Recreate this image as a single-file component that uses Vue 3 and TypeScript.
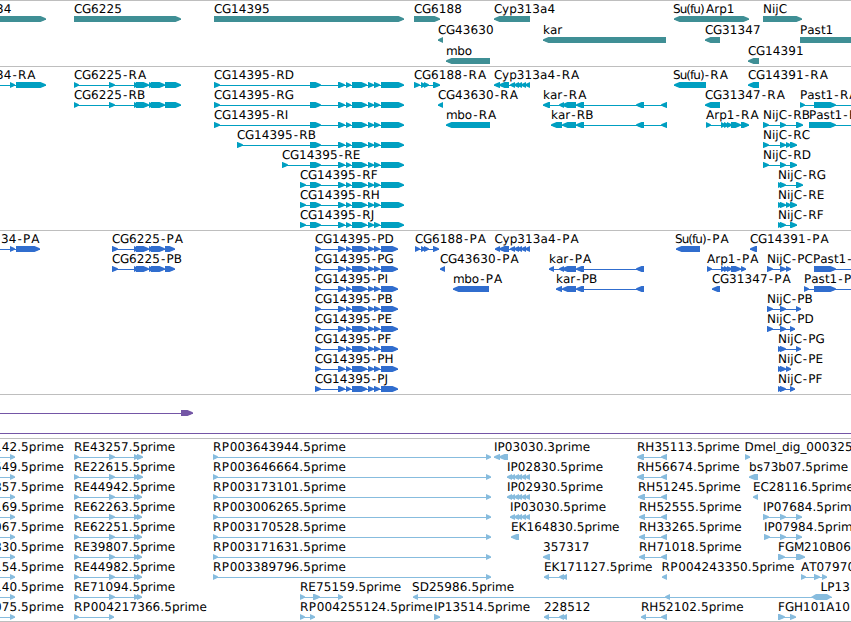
<script setup lang="ts">
type Block = [number, number]
type Strand = '+' | '-' | '='

interface Feature {
  label: string
  row: number
  x: number
  strand: Strand
  blocks: Block[]
  from: number
  to: number
}

interface Track {
  id: string
  height: number
  pitch: number
  features: Feature[]
}

const WIDTH = 851

function feat(label: string, row: number, strand: Strand, blocks: Block[], opts: Partial<Feature> = {}): Feature {
  return {
    label,
    row,
    strand,
    blocks,
    x: blocks.length ? blocks[0][0] : 0,
    from: blocks.length ? blocks[0][0] : 0,
    to: blocks.length ? blocks[blocks.length - 1][1] : WIDTH,
    ...opts,
  }
}

function shape([s, e]: Block, strand: Strand): string {
  const w = e - s
  const tip = Math.min(w, 5.5)
  const k = tip * 0.35
  if (strand === '=') return `${s},3 ${s + 5},0 ${e - 5},0 ${e},3 ${e - 5},6 ${s + 5},6`
  return strand === '+'
    ? `${s},0 ${e - tip},0 ${e - k},1.6 ${e},2.6 ${e},3.4 ${e - k},4.6 ${e - tip},6 ${s},6`
    : `${e},0 ${s + tip},0 ${s + k},1.6 ${s},2.6 ${s},3.4 ${s + k},4.6 ${s + tip},6 ${e},6`
}

// Per-character tracking, as shifts applied in front of each glyph.
function spacing(label: string): string {
  let inParens = label.startsWith('Su(fu)')
  return [...label]
    .map((c, i) => {
      if (i === 0) return 0
      const prev = label[i - 1]
      let d = 0
      if (inParens && i <= 6) d -= 0.95
      if (prev === '-') d += 1.2
      if (c === '-') d += 1
      if (c === 'A' && (prev === 'R' || prev === 'P')) d += 1
      if (/\d/.test(prev)) d += 0.1
      if (prev === 'C' || prev === 'G' || prev === 'M') d -= 0.3
      if (prev === 'R' && c === 'P') d += 0.5
      if (prev === 'P' && /\d/.test(c) && label[0] === 'R') d += 0.6
      if (prev === 'm' && c === 'b') d -= 0.5
      if (prev === '_') d -= 0.3
      return Math.round(d * 100) / 100
    })
    .join(' ')
}

const genes: Feature[] = [
  feat('34', 0, '+', [[-10, 46]], { x: -4 }),
  feat('CG6225', 0, '+', [[74, 181]]),
  feat('CG14395', 0, '+', [[214, 404]]),
  feat('CG6188', 0, '+', [[414, 440]]),
  feat('CG43630', 1, '-', [[438, 443]]),
  feat('mbo', 2, '-', [[446, 490]]),
  feat('Cyp313a4', 0, '-', [[494, 530]]),
  feat('kar', 1, '-', [[543, 666]]),
  feat('Su(fu)', 0, '-', [[674, 710]], { x: 673 }),
  feat('Arp1', 0, '+', [[706, 749]]),
  feat('CG31347', 1, '-', [[705, 720]]),
  feat('CG14391', 2, '-', [[748, 759]]),
  feat('NijC', 0, '+', [[763, 802]]),
  feat('Past1', 1, '+', [[800, 870]]),
]

const cg14395: Block[] = [[338, 345], [346, 351], [352, 367], [368, 374], [374, 380]]
const cypExons: Block[] = [[499, 509], [510, 515], [514, 519], [517, 522], [521, 526], [525, 530]]
const karExons: Block[] = [[562, 576], [576, 584], [636, 644]]
const arpExons: Block[] = [[721, 726], [724, 729], [727, 732], [731, 741]]

const rnaStarts: [string, number][] = [
  ['RD', 214], ['RG', 214], ['RI', 214], ['RB', 237], ['RE', 282], ['RF', 300], ['RH', 300], ['RJ', 300],
]

const transcripts: Feature[] = [
  feat('34-RA', 0, '+', [[10, 15], [16, 46]], { x: -4, from: -5 }),
  ...['RA', 'RB'].map((n, i) =>
    feat(`CG6225-${n}`, i, '+', [[74, 79], [109, 115], [134, 139], [136, 149], [149, 154], [151, 165], [165, 181]])),
  ...rnaStarts.map(([n, s], i) =>
    feat(`CG14395-${n}`, i, '+', [[s, s + 6], [310, 321], ...cg14395, [381, 404]])),
  feat('CG6188-RA', 0, '+', [[414, 420], [421, 426], [424, 429], [433, 440]]),
  feat('CG43630-RA', 1, '-', [[438, 443]]),
  feat('mbo-RA', 2, '-', [[446, 490]]),
  feat('Cyp313a4-RA', 0, '-', [[494, 500], ...cypExons]),
  feat('kar-RA', 1, '-', [[543, 550], [559, 564], ...karExons, [661, 667]]),
  feat('kar-RB', 2, '-', [[551, 562], ...karExons, [661, 667]]),
  feat('Su(fu)-RA', 0, '-', [[674, 706]], { x: 673 }),
  feat('CG14391-RA', 0, '-', [[748, 759]]),
  feat('CG31347-RA', 1, '-', [[705, 720]]),
  feat('Arp1-RA', 2, '+', [[706, 711], ...arpExons, [741, 749]]),
  feat('Past1-RA', 1, '+', [[800, 805], [814, 836]], { to: 870 }),
  feat('Past1-RB', 2, '+', [[809, 836]], { to: 870 }),
  feat('NijC-RB', 2, '+', [[763, 769], [780, 786], [796, 803]]),
  feat('NijC-RC', 3, '+', [[763, 769], [780, 786], [786, 791], [790, 797]]),
  feat('NijC-RD', 4, '+', [[763, 769], [780, 786], [790, 797]]),
  feat('NijC-RG', 5, '+', [[778, 783], [780, 786], [796, 803]]),
  feat('NijC-RE', 6, '+', [[778, 783], [780, 786], [786, 791], [790, 797]]),
  feat('NijC-RF', 7, '+', [[778, 783], [780, 786], [790, 797]]),
]

const proteins: Feature[] = [
  feat('34-PA', 0, '+', [[10, 15], [16, 40]], { x: 1, from: -5 }),
  ...['PA', 'PB'].map((n, i) =>
    feat(`CG6225-${n}`, i, '+', [[112, 118], [134, 139], [136, 149], [149, 154], [151, 165], [165, 175]])),
  ...['PD', 'PG', 'PI', 'PB', 'PE', 'PF', 'PH', 'PJ'].map((n, i) =>
    feat(`CG14395-${n}`, i, '+', [[315, 321], ...cg14395, [381, 398]])),
  feat('CG6188-PA', 0, '+', [[415, 420], [421, 426], [424, 429], [433, 439]]),
  feat('CG43630-PA', 1, '-', [[440, 445]]),
  feat('mbo-PA', 2, '-', [[453, 489]]),
  feat('Cyp313a4-PA', 0, '-', [[495, 500], ...cypExons], { x: 494.5 }),
  feat('kar-PA', 1, '-', [[549, 554], [559, 564], ...karExons]),
  feat('kar-PB', 2, '-', [[556, 562], ...karExons]),
  feat('Su(fu)-PA', 0, '-', [[676, 700]], { x: 675 }),
  feat('CG14391-PA', 0, '-', [[750, 757]]),
  feat('Arp1-PA', 1, '+', [[707, 712], ...arpExons, [741, 746]]),
  feat('CG31347-PA', 2, '-', [[712, 720]]),
  feat('Past1-PB', 1, '+', [[814, 836]], { x: 813, to: 870 }),
  feat('Past1-PA', 2, '+', [[804, 809], [814, 836]], { to: 870 }),
  feat('NijC-PC', 1, '+', [[767, 773], [780, 786], [786, 791]]),
  feat('NijC-PB', 3, '+', [[767, 773], [780, 786], [796, 801]]),
  feat('NijC-PD', 4, '+', [[767, 773], [780, 786], [790, 795]]),
  feat('NijC-PG', 5, '+', [[778, 783], [780, 786], [796, 801]]),
  feat('NijC-PE', 6, '+', [[778, 783], [780, 786], [786, 791]]),
  feat('NijC-PF', 7, '+', [[778, 783], [780, 786], [790, 795]]),
]

const noncoding: Feature[] = [
  feat('', 0, '+', [[181, 193]], { from: -5 }),
  feat('', 1, '+', []),
]

const ests: Feature[] = [
  ...['142', '549', '857', '169', '067', '830', '154', '140', '075'].map((n, i) =>
    feat(`${n}.5prime`, i, '+', [[10, 15]], { x: -6, from: -5 })),
  ...['RE43257', 'RE22615', 'RE44942', 'RE62263', 'RE62251', 'RE39807', 'RE44982', 'RE71094'].map((n, i) =>
    feat(`${n}.5prime`, i, '+', [[74, 79], [109, 115], [134, 139], [137, i < 2 ? 143 : 142]])),
  feat('RP004217366.5prime', 8, '+', [[74, 79], [109, 114]]),
  ...['3643944', '3646664', '3173101', '3006265', '3170528', '3171631', '3389796'].map((n, i) =>
    feat(`RP00${n}.5prime`, i, '+', [[213, 218], [486, 491]])),
  feat('RE75159.5prime', 7, '+', [[300, 305], [313, 320], [338, 343]]),
  feat('RP004255124.5prime', 8, '+', [[300, 305], [310, 315]]),
  feat('IP03030.3prime', 0, '-', [[494, 500], [499, 508]]),
  feat('IP02830.5prime', 1, '-', [[507, 512], ...cypExons.slice(1)]),
  feat('IP02930.5prime', 2, '-', [[507, 512], ...cypExons.slice(1)]),
  feat('IP03030.5prime', 3, '-', cypExons.slice(1)),
  feat('EK164830.5prime', 4, '-', [[511, 519]]),
  feat('357317', 5, '-', [[543, 550]]),
  feat('EK171127.5prime', 6, '-', [[544, 549], [559, 564], [562, 567]]),
  feat('SD25986.5prime', 7, '-', [[413, 418], [665, 670]], { x: 412, to: 812 }),
  feat('IP13514.5prime', 8, '+', [[434, 440]]),
  feat('228512', 8, '-', [[544, 549], [559, 564], [562, 567]]),
  feat('RH35113.5prime', 0, '-', [[637, 644], [661, 667]]),
  feat('RH56674.5prime', 1, '-', [[637, 644], [661, 667]]),
  feat('RH51245.5prime', 2, '-', [[638, 645], [661, 667]]),
  feat('RH52555.5prime', 3, '-', [[639, 645], [661, 667]]),
  feat('RH33265.5prime', 4, '-', [[639, 645], [661, 667]]),
  feat('RH71018.5prime', 5, '-', [[639, 645], [661, 667]]),
  feat('RP004243350.5prime', 6, '-', [[662, 667]], { x: 661.5 }),
  feat('RH52102.5prime', 8, '-', [[641, 646], [661, 667]]),
  feat('Dmel_dig_000325', 0, '+', [[745, 750]], { x: 744.5 }),
  feat('bs73b07.5prime', 1, '-', [[749, 758]]),
  feat('EC28116.5prime', 2, '-', [[753, 758]]),
  feat('IP07684.5prime', 3, '+', [[763, 769], [780, 786], [796, 802]]),
  feat('IP07984.5prime', 4, '+', [[764, 770], [780, 786], [796, 802]]),
  feat('FGM210B06', 5, '+', [[778, 785], [796, 805]]),
  feat('AT07970', 6, '+', [[801, 806], [814, 820], [822, 827]]),
  feat('LP13', 7, '=', [[811, 832]], { x: 820.5 }),
  feat('FGH101A10', 8, '+', [[778, 785], [790, 796]]),
]

const tracks: Track[] = [
  { id: 'gene', height: 66, pitch: 21, features: genes },
  { id: 'transcript', height: 164, pitch: 20, features: transcripts },
  { id: 'protein', height: 164, pitch: 20, features: proteins },
  { id: 'noncoding', height: 44, pitch: 20, features: noncoding },
  { id: 'est', height: 183, pitch: 20, features: ests },
]
</script>

<template>
  <main class="browser">
    <section v-for="track in tracks" :key="track.id" class="track" :class="track.id">
      <svg class="canvas" :width="WIDTH" :height="track.height - 1" :viewBox="`0 1 ${WIDTH} ${track.height - 1}`">
        <g v-for="(f, i) in track.features" :key="i" :transform="`translate(0 ${f.row * track.pitch})`">
          <rect class="intron" :x="f.from" y="19" :width="f.to - f.from" height="1" />
          <g transform="translate(0 16)">
            <polygon v-for="(b, j) in f.blocks" :key="j" class="exon" :points="shape(b, f.strand)" />
          </g>
          <text v-if="f.label" class="label" :x="f.x" y="13" :dx="spacing(f.label)">{{ f.label }}</text>
        </g>
      </svg>
    </section>
  </main>
</template>

<style>
body {
  margin: 0;
  background: #fff;
}
</style>

<style scoped>
.browser {
  display: flex;
  flex-direction: column;
  width: 851px;
  height: 622px;
  box-sizing: border-box;
  overflow: hidden;
  background: #fff;
  border-bottom: 1px solid #bebebe;
}
.track {
  flex: none;
  border-top: 1px solid #bebebe;
}
.canvas {
  display: block;
  overflow: hidden;
}
.label {
  font-family: "DejaVu Sans", sans-serif;
  font-size: 12px;
  font-kerning: none;
  text-rendering: geometricPrecision;
  fill: #000;
}
.intron,
.exon {
  fill: var(--ink);
}
.gene { --ink: #3f8f95; }
.transcript { --ink: #009fc1; }
.protein { --ink: #306dce; }
.noncoding { --ink: #7456a6; }
.est { --ink: #87bcde; }
</style>
